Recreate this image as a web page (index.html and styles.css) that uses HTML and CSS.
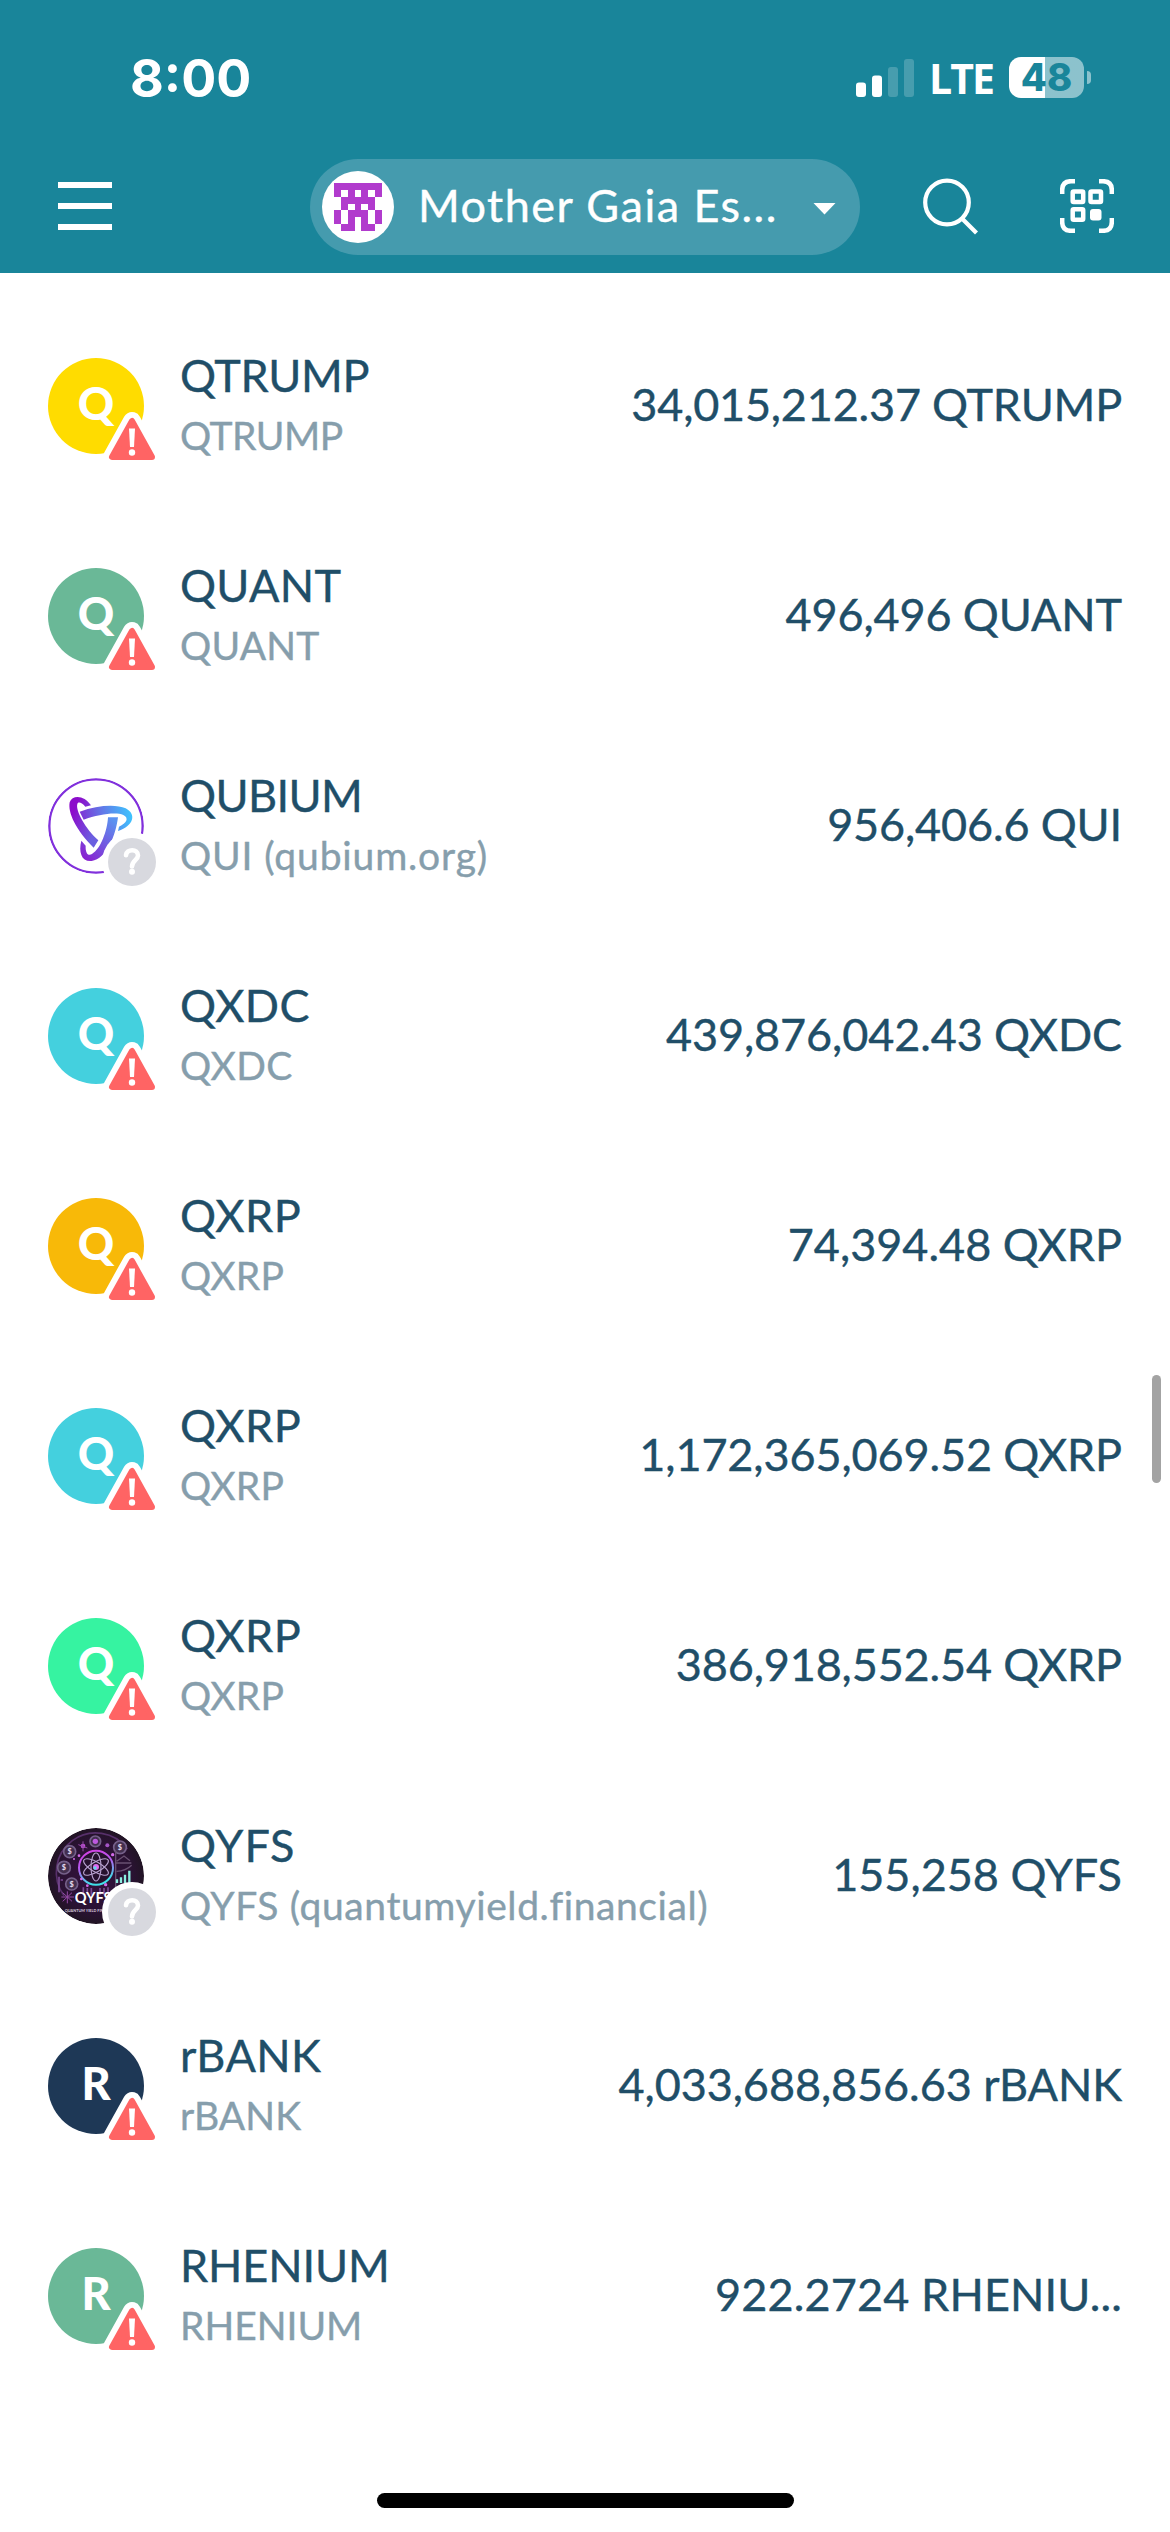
FILE: index.html
```
<!DOCTYPE html>
<html lang="en">
<head>
<meta charset="utf-8">
<title>Wallet</title>
<link rel="stylesheet" href="styles.css">
</head>
<body>
<svg class="defs" aria-hidden="true">
  <defs>
    <linearGradient id="flow" gradientUnits="userSpaceOnUse" x1="80" y1="150" x2="265" y2="110">
      <stop offset="0" stop-color="#8d10cc"/><stop offset=".5" stop-color="#6472e6"/><stop offset="1" stop-color="#3cc8ff"/>
    </linearGradient>
    <linearGradient id="flow-left" gradientUnits="userSpaceOnUse" x1="85" y1="120" x2="160" y2="150">
      <stop offset="0" stop-color="#8c0ccb"/><stop offset="1" stop-color="#6b5fe0"/>
    </linearGradient>
    <linearGradient id="flow-down" gradientUnits="userSpaceOnUse" x1="210" y1="140" x2="115" y2="250">
      <stop offset="0" stop-color="#5b92f0"/><stop offset="1" stop-color="#8a20d0"/>
    </linearGradient>
    <linearGradient id="neon" x1="0" y1="0" x2=".3" y2="1">
      <stop offset="0" stop-color="#d63be0"/><stop offset=".5" stop-color="#b45cf0"/><stop offset="1" stop-color="#3fe0e8"/>
    </linearGradient>
    <radialGradient id="night">
      <stop offset="0" stop-color="#35123f"/><stop offset=".75" stop-color="#2a1233"/><stop offset="1" stop-color="#211424"/>
    </radialGradient>
    <symbol id="warning" viewBox="0 0 64 60">
      <path d="M32 15 12 51H52Z" fill="#fff" stroke="#fff" stroke-width="18" stroke-linejoin="round"/>
      <path d="M32 15 12 51H52Z" fill="#ff6464" stroke="#ff6464" stroke-width="6" stroke-linejoin="round"/>
      <path d="M29 22.500H35L34 41H30Z" fill="#fff"/>
      <circle cx="32" cy="46.500" r="3.200" fill="#fff"/>
    </symbol>
    <symbol id="unknown" viewBox="0 0 60 60">
      <circle cx="30" cy="30" r="30" fill="#fff"/>
      <circle cx="30" cy="30" r="24" fill="#d8d9df"/>
      <path d="M24 23.200C24.600 16.500 36 16.500 36 23.500C36 28 30 28.500 30 34.500" fill="none" stroke="#fff" stroke-width="4.600" stroke-linecap="round"/>
      <circle cx="30" cy="39.700" r="3" fill="#fff"/>
    </symbol>
  </defs>
</svg>

<header class="top">
  <div class="status">
    <span class="clock">8:00</span>
    <div class="indicators">
      <svg class="signal" viewBox="0 0 58 38">
        <g fill="#fff"><rect y="23.500" width="10" height="14.500" rx="3"/><rect x="16" y="16.500" width="10" height="21.500" rx="3"/></g>
        <g fill="#fff" opacity=".2"><rect x="32" y="8" width="10" height="30" rx="3"/><rect x="48" width="10" height="38" rx="3"/></g>
      </svg>
      <span class="network">LTE</span>
      <span class="battery">48</span>
      <span class="battery-tip"></span>
    </div>
  </div>
  <nav class="bar">
    <span class="menu"><i></i><i></i><i></i></span>
    <div class="account">
      <span class="account-icon">
        <svg viewBox="0 0 7 7" fill="#b13bcd" shape-rendering="crispEdges"><path d="M0 0H7V2H6V1H5V2H4V1H3V2H2V1H1V2H0ZM1 2H6V4H5V3H4V4H3V3H2V4H1ZM0 4H1V6H0ZM6 4H7V6H6ZM2 4H5V7H4V5H3V7H2ZM1 6H2V7H1ZM5 6H6V7H5Z"/></svg>
      </span>
      <span class="account-name">Mother Gaia Es...</span>
      <span class="caret"></span>
    </div>
    <svg class="search" viewBox="0 0 58 58" fill="none" stroke="#fff" stroke-width="4.200"><circle cx="26" cy="25.500" r="21.800"/><path d="M41 41.500 55.500 56"/></svg>
    <svg class="scan" viewBox="0 0 54 54" fill="none" stroke="#fff">
      <path stroke-width="4.500" d="M2.200 15V11Q2.200 2.200 11 2.200H15M39 2.200H43Q51.800 2.200 51.800 11V15M51.800 39V43Q51.800 51.800 43 51.800H39M15 51.800H11Q2.200 51.800 2.200 43V39"/>
      <g stroke-width="4.500"><rect x="12.700" y="12.500" width="10.500" height="10.500" rx="1"/><rect x="30.500" y="12.500" width="10.500" height="10.500" rx="1"/><rect x="12.700" y="30.300" width="10.500" height="10.500" rx="1"/></g>
      <rect x="30" y="30" width="11.500" height="11.500" rx="3" fill="#fff" stroke="none"/>
    </svg>
  </nav>
</header>

<main class="list">
  <div class="row qtrump"><div class="avatar yellow">Q<svg class="warn"><use href="#warning"/></svg></div><div class="label"><div class="name">QTRUMP</div><div class="sub">QTRUMP</div></div><div class="amount">34,015,212.37 QTRUMP</div></div>
  <div class="row quant"><div class="avatar sage">Q<svg class="warn"><use href="#warning"/></svg></div><div class="label"><div class="name">QUANT</div><div class="sub">QUANT</div></div><div class="amount">496,496 QUANT</div></div>
  <div class="row qubium"><div class="avatar">
    <svg class="logo" viewBox="12 12 288 288">
      <circle cx="156" cy="156" r="140" fill="#fff" stroke="#8130dc" stroke-width="7"/>
      <path fill="url(#flow-left)" d="M141 94C121 63 85 61 77 85C71 115 95 168 149 221L163 199C124 164 94 110 100 90C103 82 113 86 124 98Z"/>
      <path fill="url(#flow)" d="M107 113C160 94 215 90 245 103C278 120 270 156 222 171L225 158C248 148 256 132 238 123C215 113 165 121 119 137Z"/>
      <path fill="url(#flow-down)" d="M192 130H222C215 185 188 255 143 261C113 264 103 235 112 200L125 215C124 236 131 247 144 240C170 225 190 170 192 130Z"/>
    </svg>
    <svg class="query"><use href="#unknown"/></svg></div><div class="label"><div class="name">QUBIUM</div><div class="sub">QUI (qubium.org)</div></div><div class="amount">956,406.6 QUI</div></div>
  <div class="row qxdc"><div class="avatar cyan">Q<svg class="warn"><use href="#warning"/></svg></div><div class="label"><div class="name">QXDC</div><div class="sub">QXDC</div></div><div class="amount">439,876,042.43 QXDC</div></div>
  <div class="row qxrp one"><div class="avatar amber">Q<svg class="warn"><use href="#warning"/></svg></div><div class="label"><div class="name">QXRP</div><div class="sub">QXRP</div></div><div class="amount">74,394.48 QXRP</div></div>
  <div class="row qxrp two"><div class="avatar cyan">Q<svg class="warn"><use href="#warning"/></svg></div><div class="label"><div class="name">QXRP</div><div class="sub">QXRP</div></div><div class="amount">1,172,365,069.52 QXRP</div></div>
  <div class="row qxrp three"><div class="avatar mint">Q<svg class="warn"><use href="#warning"/></svg></div><div class="label"><div class="name">QXRP</div><div class="sub">QXRP</div></div><div class="amount">386,918,552.54 QXRP</div></div>
  <div class="row qyfs"><div class="avatar">
    <svg class="logo" viewBox="12 12 288 288">
      <circle cx="156" cy="156" r="144" fill="url(#night)"/>
      <path d="M60 215A112 112 0 0 1 250 75" fill="none" stroke="#57306a" stroke-width="5"/>
      <path d="M45 158V205M50 168H57M118 190V212M130 192V212M142 192V212M168 192V212M180 192V212M192 190V205" stroke="#7a4a94" stroke-width="5" fill="none"/>
      <g fill="#43304f" stroke="#75608a" stroke-width="5"><circle cx="77" cy="83" r="18"/><circle cx="60" cy="131" r="19"/><circle cx="83" cy="180" r="18"/><circle cx="154" cy="52" r="16"/><circle cx="228" cy="70" r="19"/></g>
      <circle cx="154" cy="52" r="8" fill="#bd59df"/><circle cx="190" cy="64" r="6" fill="#a455c6"/><circle cx="117" cy="66" r="7" fill="#c04ddb"/>
      <g class="coin"><text x="77" y="91">$</text><text x="60" y="139">$</text><text x="83" y="188">$</text><text x="228" y="78">$</text></g>
      <circle cx="156" cy="131" r="51" fill="#26112e" stroke="url(#neon)" stroke-width="6"/>
      <g fill="none" stroke="#b7a1cf" stroke-width="3.500"><ellipse cx="156" cy="129" rx="15" ry="42"/><ellipse cx="156" cy="129" rx="15" ry="42" transform="rotate(60 156 129)"/><ellipse cx="156" cy="129" rx="15" ry="42" transform="rotate(120 156 129)"/></g>
      <circle cx="156" cy="129" r="9" fill="#e06af0"/><circle cx="153" cy="132" r="5" fill="#5fd9ec"/>
      <path d="M215 80V205M215 117H262M218 112 240 96 258 110M218 142Q244 142 263 124" fill="none" stroke="#685071" stroke-width="4"/>
      <path d="M219 177V166M231 177V160M243 177V152M256 177V140" stroke="#8ceee0" stroke-width="7"/>
      <path d="M56 206 84 232M84 206 56 232M70 202V238M52 219H90M103 62 130 72M117 52V82" stroke="#944aa5" stroke-width="3"/>
      <g fill="#d36be8"><circle cx="105" cy="95" r="4"/><circle cx="206" cy="92" r="5"/><circle cx="112" cy="165" r="4"/><circle cx="130" cy="185" r="4"/><circle cx="185" cy="182" r="5"/><circle cx="90" cy="105" r="3"/></g>
      <text class="brand" x="92" y="238">QYFS</text>
      <text class="tagline" x="62" y="264">QUANTUM YIELD FINANCIAL</text>
    </svg>
    <svg class="query"><use href="#unknown"/></svg></div><div class="label"><div class="name">QYFS</div><div class="sub">QYFS (quantumyield.financial)</div></div><div class="amount">155,258 QYFS</div></div>
  <div class="row rbank"><div class="avatar navy">R<svg class="warn"><use href="#warning"/></svg></div><div class="label"><div class="name">rBANK</div><div class="sub">rBANK</div></div><div class="amount">4,033,688,856.63 rBANK</div></div>
  <div class="row rhenium"><div class="avatar sage">R<svg class="warn"><use href="#warning"/></svg></div><div class="label"><div class="name">RHENIUM</div><div class="sub">RHENIUM</div></div><div class="amount">922.2724 RHENIU...</div></div>
  <span class="scrollbar"></span>
</main>

<footer class="home"><span></span></footer>
</body>
</html>
```
FILE: styles.css
```
* { box-sizing: border-box; }

body {
  margin: 0;
  width: 1170px;
  height: 2532px;
  display: flex;
  flex-direction: column;
  overflow: hidden;
  background: #fff;
  color: #204e68;
  font-family: Lato, sans-serif;
  white-space: nowrap;
}

.defs { position: absolute; width: 0; height: 0; }

/* Header */
.top { height: 273px; background: #19859a; color: #fff; flex: none; }

.status {
  height: 159px;
  padding: 0 79px 0 130px;
  display: flex;
  justify-content: space-between;
  align-items: flex-start;
  font-family: Inter, sans-serif;
}
.clock { margin-top: 47px; font-size: 52px; line-height: 64px; font-weight: 700; letter-spacing: 0; }
.indicators { display: flex; align-items: center; height: 41px; margin-top: 57px; }
.signal { width: 58px; height: 38px; margin-right: 15px; }
.network { width: 65px; font-size: 41px; line-height: 42px; font-weight: 700; font-family: "Open Sans", sans-serif; letter-spacing: -2px; margin-right: 15px; }
.battery {
  width: 75px;
  height: 41px;
  border-radius: 12px;
  background: linear-gradient(90deg, #fff 36px, rgba(255, 255, 255, .5) 36px);
  color: #19859a;
  font-size: 38px;
  line-height: 41px;
  font-weight: 800;
  text-align: center;
}
.battery-tip { width: 4px; height: 13px; margin-left: 3px; border-radius: 0 5px 5px 0; background: rgba(255, 255, 255, .5); }

.bar { display: flex; height: 96px; align-items: center; padding-left: 58px; }
.menu { display: flex; flex-direction: column; gap: 15px; width: 54px; margin-bottom: 3px; }
.menu i { height: 6px; background: #fff; }
.account {
  display: flex;
  align-items: center;
  width: 550px;
  height: 96px;
  margin-left: 198px;
  padding-left: 12px;
  border-radius: 48px;
  background: #459bae;
}
.account-icon { width: 72px; height: 72px; padding: 12px; border-radius: 50%; background: #fff; }
.account-icon svg { display: block; width: 48px; height: 48px; }
.account-name { width: 360px; margin-left: 24px; padding-bottom: 5px; font-size: 45px; line-height: 60px; letter-spacing: 1.46px; -webkit-text-stroke: .4px; }
.caret { width: 23px; height: 12px; margin: 3px 0 0 35px; background: #fff; clip-path: polygon(0 0, 100% 0, 50% 100%); }
.search { width: 58px; height: 58px; margin-left: 61px; margin-bottom: 2px; }
.scan { width: 54px; height: 54px; margin-left: 81px; margin-bottom: 3px; }

/* Token list */
.list { position: relative; padding-top: 28px; height: 2128px; flex: none; }
.row { display: flex; align-items: center; height: 210px; padding: 0 48px; }

.avatar {
  position: relative;
  width: 96px;
  height: 96px;
  flex: none;
  border-radius: 50%;
  color: #fff;
  font-size: 45px;
  font-weight: 900;
  line-height: 90px;
  text-align: center;
}
.logo { display: block; width: 96px; height: 96px; border-radius: 50%; }
.warn { position: absolute; left: 52px; top: 48px; width: 64px; height: 60px; }
.query { position: absolute; left: 54px; top: 54px; width: 60px; height: 60px; }
.coin { fill: #e4d9ec; font-size: 22px; text-anchor: middle; }
.brand { fill: #fff; font-size: 44px; font-weight: 700; }
.tagline { fill: #d9cddf; font-size: 11.500px; font-weight: 700; }

.yellow { background: #ffdc00; }
.sage { background: #6ab897; }
.cyan { background: #44d0de; }
.amber { background: #f8b908; }
.mint { background: #36f3a1; }
.navy { background: #1e3856; }

.label { margin-left: 36px; padding-bottom: 3px; line-height: 60px; -webkit-text-stroke: .4px; }
.name { font-size: 45px; letter-spacing: var(--name); }
.sub { font-size: 39px; color: #869eac; letter-spacing: var(--sub); }
.amount { margin-left: auto; padding-bottom: 5px; font-size: 45px; line-height: 60px; letter-spacing: var(--amount); -webkit-text-stroke: .4px; }

/* Tracking per token */
.qtrump { --name: -.3px; --sub: -.5px; --amount: -.2px; }
.quant { --name: .32px; --sub: .2px; --amount: -.13px; }
.qubium { --name: -.6px; --sub: .85px; --amount: -.15px; }
.qxdc { --name: .4px; --sub: .4px; --amount: -.1px; }
.qxrp { --name: .55px; --sub: .2px; }
.one { --amount: 0px; }
.two { --amount: -.12px; }
.three { --amount: -.14px; }
.qyfs { --name: 1px; --sub: .6px; --amount: 0px; }
.rbank { --name: .39px; --sub: .1px; --amount: -.08px; }
.rhenium { --name: -.1px; --sub: 0px; --amount: .15px; }

.scrollbar { position: absolute; left: 1152px; top: 1102px; width: 9px; height: 108px; border-radius: 5px; background: #a3a3a3; }

/* Home indicator */
.home { flex: 1; display: flex; justify-content: center; align-items: flex-end; padding-bottom: 24px; }
.home span { width: 417px; height: 15px; border-radius: 8px; background: #000; }
```
